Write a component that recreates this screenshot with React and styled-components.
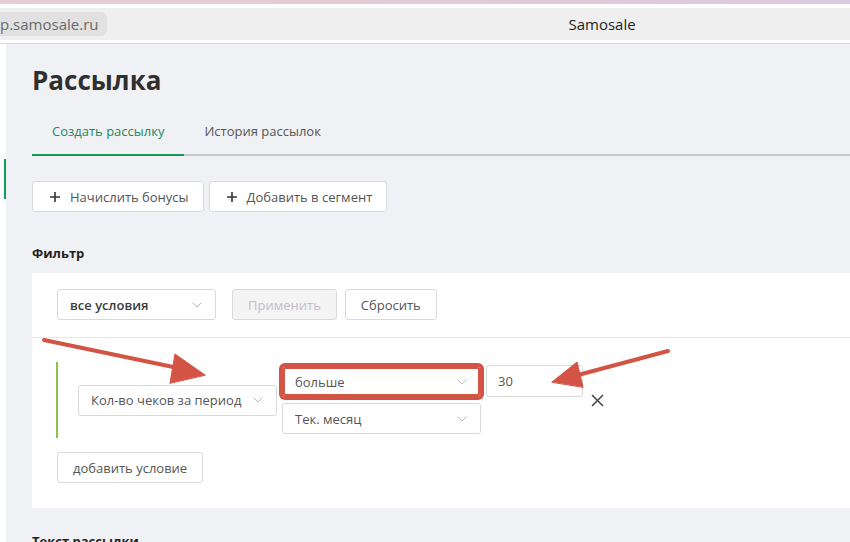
import React from "react";
import styled, { createGlobalStyle, css } from "styled-components";

const GlobalStyle = createGlobalStyle`
  html, body {
    margin: 0;
    padding: 0;
    background: #ffffff;
    overflow: hidden;
  }
  body {
    font-family: "Open Sans", "Noto Sans", sans-serif;
  }
`;

const RED = "#d35345";

const Page = styled.div`
  position: relative;
  width: 850px;
  height: 542px;
  overflow: hidden;
  background: #ffffff;
`;

const TopStripe = styled.div`
  height: 4px;
  background: linear-gradient(90deg, #e6cdd2 0%, #e2cad8 60%, #dccae2 100%);
`;

const BrowserBar = styled.div`
  margin-top: 4px;
  height: 32px;
  background: #efefef;
  display: flex;
  align-items: center;
`;

const UrlPill = styled.div`
  margin-left: -12px;
  padding: 0 9px 0 12px;
  height: 24px;
  display: flex;
  align-items: center;
  background: #e1e1e1;
  border-radius: 6px;
  color: #6a6a6a;
  font-size: 15px;
`;

const WindowTitle = styled.div`
  margin-left: 461px;
  color: #1e1e1e;
  font-size: 15px;
`;

const Body = styled.div`
  margin-top: 3px;
  border-top: 1px solid #d9d9d9;
  display: flex;
  height: 520px;
`;

const Sidebar = styled.div`
  width: 6px;
  flex-shrink: 0;
  background: #ffffff;
`;

const SideMark = styled.div`
  margin: 115px 0 0 4px;
  width: 2px;
  height: 40px;
  background: #0f9d58;
`;

const Main = styled.div`
  flex: 1;
  background: #f0f1f4;
  padding: 16px 0 0 26px;
`;

const Title = styled.h1`
  margin: 0;
  font-size: 26px;
  line-height: 40px;
  font-weight: 700;
  color: #2f2f2f;
`;

const TabBar = styled.div`
  margin-top: 8px;
  display: flex;
  border-bottom: 2px solid #cacaca;
`;

const Tab = styled.div`
  padding: 14px 20px 14px 20px;
  font-size: 13px;
  line-height: 18px;
  margin-bottom: -2px;
  border-bottom: 2px solid transparent;
  color: #555555;
  ${(p) =>
    p.$active &&
    css`
      color: #23895a;
      border-bottom-color: #0f9d58;
    `}
`;

const Actions = styled.div`
  margin-top: 25px;
  display: flex;
  gap: 5px;
`;

const Button = styled.button`
  height: 31px;
  box-sizing: border-box;
  display: inline-flex;
  align-items: center;
  gap: 10px;
  padding: 0 ${(p) => p.$pad || 15}px 0 ${(p) => p.$padLeft || p.$pad || 15}px;
  background: ${(p) => (p.$disabled ? "#f4f4f4" : "#ffffff")};
  border: 1px solid #dadada;
  border-radius: 3px;
  font-family: inherit;
  font-size: 13px;
  color: ${(p) => (p.$disabled ? "#c6bccd" : "#555555")};
  cursor: pointer;
`;

const SectionTitle = styled.div`
  margin-top: ${(p) => p.$top}px;
  font-size: 13px;
  line-height: 18px;
  font-weight: 700;
  color: #222222;
`;

const Panel = styled.div`
  margin-top: 11px;
  background: #ffffff;
`;

const PanelTop = styled.div`
  display: flex;
  align-items: center;
  padding: 16px 25px 17px;
  border-bottom: 1px solid #e6e6e6;
`;

const PanelBody = styled.div`
  padding: 24px 0 25px 24px;
`;

const Condition = styled.div`
  display: flex;
  align-items: center;
  padding: 4px 0 4px 20px;
  border-left: 2px solid #8bc34a;
  gap: 5px;
`;

const Stack = styled.div`
  display: flex;
  flex-direction: column;
  gap: 6px;
`;

const StackLine = styled.div`
  display: flex;
  align-items: flex-start;
  gap: 5px;
`;

const Select = styled.div`
  width: ${(p) => p.$w}px;
  height: 31px;
  box-sizing: border-box;
  display: flex;
  align-items: center;
  justify-content: space-between;
  padding: 0 13px 0 12px;
  background: #ffffff;
  border: 1px solid #d9d9d9;
  border-radius: 3px;
  font-size: 13px;
  color: ${(p) => (p.$strong ? "#3a3a3a" : "#555555")};
  font-weight: ${(p) => (p.$strong ? 600 : 400)};
  ${(p) =>
    p.$highlight &&
    css`
      border-color: ${RED};
      box-shadow: 0 0 0 3px ${RED}, inset 0 0 0 2px ${RED};
    `}
`;

const NumberInput = styled.div`
  width: 97px;
  height: 32px;
  margin-top: -1px;
  box-sizing: border-box;
  display: flex;
  align-items: center;
  padding-left: 11px;
  border: 1px solid #d9d9d9;
  border-radius: 3px;
  font-size: 13px;
  color: #555555;
`;

const RemoveIcon = styled.svg`
  margin-left: 3px;
  flex-shrink: 0;
`;

const AddRow = styled.div`
  margin-top: 14px;
  margin-left: 1px;
`;

const Overlay = styled.svg`
  position: absolute;
  left: 0;
  top: 0;
  pointer-events: none;
`;

function Chevron() {
  return (
    <svg width="10" height="6" viewBox="0 0 10 6">
      <path d="M0.5 0.5 L5 5 L9.5 0.5" fill="none" stroke="#bdbdbd" strokeWidth="1" />
    </svg>
  );
}

function Plus() {
  return (
    <svg width="10" height="10" viewBox="0 0 10 10">
      <path d="M5 0 V10 M0 5 H10" stroke="#333" strokeWidth="1.6" />
    </svg>
  );
}

function Arrows() {
  return (
    <Overlay width="850" height="542" viewBox="0 0 850 542">
      <g fill={RED} stroke={RED} strokeLinecap="round" strokeLinejoin="round">
        <path d="M44 340 L178 368" strokeWidth="4" fill="none" />
        <polygon points="205,375 175,354 170,383" strokeWidth="1" />
        <path d="M668 351 L578 375" strokeWidth="4" fill="none" />
        <polygon points="552,382 577,362 583,387" strokeWidth="1" />
      </g>
    </Overlay>
  );
}

export default function App() {
  return (
    <Page>
      <GlobalStyle />
      <TopStripe />
      <BrowserBar>
        <UrlPill>p.samosale.ru</UrlPill>
        <WindowTitle>Samosale</WindowTitle>
      </BrowserBar>
      <Body>
        <Sidebar>
          <SideMark />
        </Sidebar>
        <Main>
          <Title>Рассылка</Title>
          <TabBar>
            <Tab $active>Создать рассылку</Tab>
            <Tab>История рассылок</Tab>
          </TabBar>
          <Actions>
            <Button $padLeft={17} $pad={14}>
              <Plus />
              Начислить бонусы
            </Button>
            <Button $padLeft={17} $pad={14}>
              <Plus />
              Добавить в сегмент
            </Button>
          </Actions>
          <SectionTitle $top={32}>Фильтр</SectionTitle>
          <Panel>
            <PanelTop>
              <Select $w={159} $strong>
                все условия
                <Chevron />
              </Select>
              <Button $disabled style={{ marginLeft: 16 }}>
                Применить
              </Button>
              <Button style={{ marginLeft: 8 }}>Сбросить</Button>
            </PanelTop>
            <PanelBody>
              <Condition>
                <Select $w={199}>
                  Кол-во чеков за период
                  <Chevron />
                </Select>
                <Stack>
                  <StackLine>
                    <Select $w={199} $highlight>
                      больше
                      <Chevron />
                    </Select>
                    <NumberInput>30</NumberInput>
                  </StackLine>
                  <Select $w={199}>
                    Тек. месяц
                    <Chevron />
                  </Select>
                </Stack>
                <RemoveIcon width="13" height="13" viewBox="0 0 13 13">
                  <path d="M1 1 L12 12 M12 1 L1 12" stroke="#444" strokeWidth="1.5" />
                </RemoveIcon>
              </Condition>
              <AddRow>
                <Button>добавить условие</Button>
              </AddRow>
            </PanelBody>
          </Panel>
          <SectionTitle $top={24}>Текст рассылки</SectionTitle>
        </Main>
      </Body>
      <Arrows />
    </Page>
  );
}
